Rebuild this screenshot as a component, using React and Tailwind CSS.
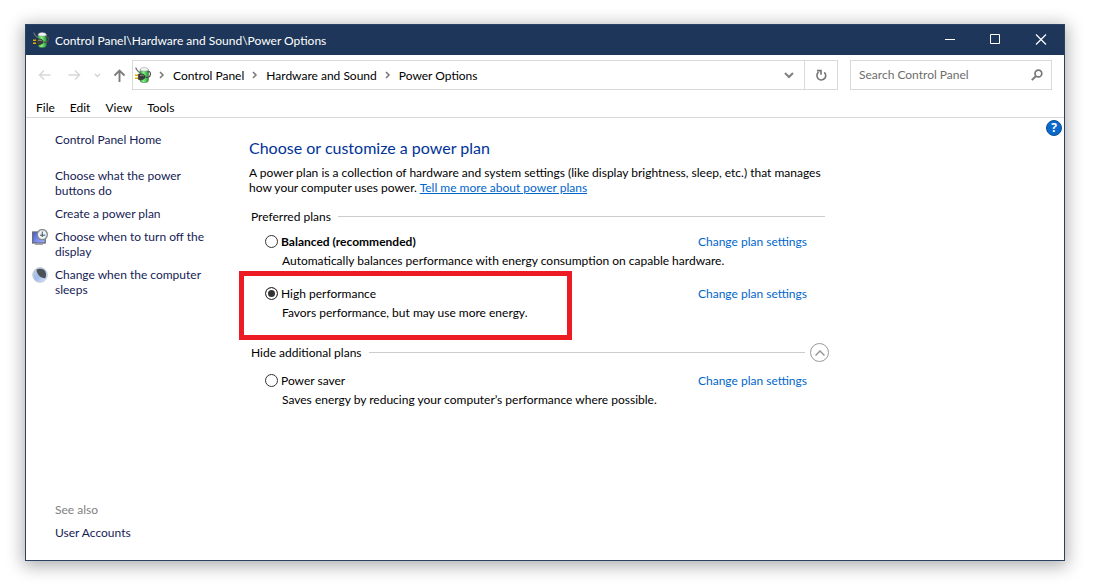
import { useState } from "react";

function PowerIcon({ className }) {
  return (
    <svg viewBox="0 0 16 16" className={className} aria-hidden="true">
      <defs>
        <linearGradient id="battery" x1="0" x2="1" y1="0" y2="0">
          <stop offset="0" stopColor="#2fae3a" />
          <stop offset="0.4" stopColor="#8cf08a" />
          <stop offset="1" stopColor="#1c9a2a" />
        </linearGradient>
      </defs>
      <rect x="5" y="1.500" width="8.500" height="13.900" rx="2.400" fill="url(#battery)" stroke="#3f6a42" strokeWidth="0.500" />
      <path d="M5 3.200C5 1.400 6.800.5 9.200.5s4.300.9 4.300 2.700c-2 1.200-6.500 1.200-8.500 0z" fill="#f2f5f8" stroke="#8a908d" strokeWidth="0.500" />
      <path d="M12.500 5c2.600-1.200 3.200.8 2.800 3-.3 1.800-2 2.700-4.800 2.400" fill="none" stroke="#4d4f50" strokeWidth="1.200" />
      <path d="M.8.500c.4 2.600 2 4 4.200 5.300" fill="none" stroke="#6d7070" strokeWidth="1.200" />
      <path d="M0 8.300h3.600M0 11.300h3.600" stroke="#e0b400" strokeWidth="1.500" />
      <path d="M3.400 7.200 5.500 6.800c2.800 0 4.600 1.100 4.600 3s-1.800 3-4.600 3l-2.100-.4z" fill="#3a3b3b" stroke="#1f2020" strokeWidth="0.500" />
      <path d="M5 8.400c1.500-.5 2.800-.3 3.700.5" fill="none" stroke="#a5a8a8" strokeWidth="0.900" />
    </svg>
  );
}

function DisplayIcon() {
  return (
    <svg viewBox="0 0 16 16" className="size-4" aria-hidden="true">
      <defs>
        <linearGradient id="screen" x1="0" x2="1" y1="0" y2="1">
          <stop offset="0" stopColor="#4258d8" />
          <stop offset="1" stopColor="#a9b8ff" />
        </linearGradient>
      </defs>
      <rect x="0.700" y="3" width="12.500" height="11" fill="url(#screen)" stroke="#666a78" strokeWidth="1.300" />
      <path d="M3 15.300h8" stroke="#8d9098" strokeWidth="1" />
      <circle cx="10.300" cy="5.600" r="5" fill="#eef3f5" stroke="#858b90" strokeWidth="1.400" />
      <path d="M10.300 2.500v3.700h3M10.300 6.200v1.800M8 6.200h2.300" fill="none" stroke="#445566" strokeWidth="1" />
    </svg>
  );
}

function MoonIcon() {
  return (
    <svg viewBox="0 0 16 16" className="size-4" aria-hidden="true">
      <defs>
        <linearGradient id="moon" x1="0" x2="1" y1="0" y2="1">
          <stop offset="0" stopColor="#c9d0d6" />
          <stop offset="0.500" stopColor="#9dbbec" />
          <stop offset="1" stopColor="#e6edf6" />
        </linearGradient>
      </defs>
      <circle cx="8" cy="8" r="7.400" fill="url(#moon)" stroke="#c8ccd2" strokeWidth="0.800" />
      <path d="M4.500 2.800C7 1 11 1.300 13 4c1.500 2.500 1.300 5.200.2 7.200C9.500 11.500 5 8.500 4.500 2.800z" fill="#4c5057" />
    </svg>
  );
}

const crumbs = ["Control Panel", "Hardware and Sound", "Power Options"];
const menus = ["File", "Edit", "View", "Tools"];
const tasks = [
  { text: "Choose what the power buttons do" },
  { text: "Create a power plan" },
  { text: "Choose when to turn off the display", icon: <DisplayIcon /> },
  { text: "Change when the computer sleeps", icon: <MoonIcon /> },
];

function TitleBar() {
  return (
    <header className="flex h-[30px] shrink-0 items-center bg-[#1d3659] pl-[7px] text-white">
      <PowerIcon className="size-4" />
      <h1 className="ml-[6px] flex-1">Control Panel\Hardware and Sound\Power Options</h1>
      <button aria-label="Minimize" className="flex h-full w-[45px] items-center justify-center">
        <svg viewBox="0 0 12 12" className="size-3" stroke="#fff" aria-hidden="true"><path d="M1 5.500h10" /></svg>
      </button>
      <button aria-label="Maximize" className="flex h-full w-[46px] items-center justify-center">
        <svg viewBox="0 0 12 12" className="size-3" fill="none" stroke="#fff" aria-hidden="true"><path d="M1.500.5h9v9h-9z" /></svg>
      </button>
      <button aria-label="Close" className="flex h-full w-[46px] items-center justify-center">
        <svg viewBox="0 0 12 12" className="size-3" stroke="#fff" strokeWidth="1.200" aria-hidden="true"><path d="M1 .5l10 10M11 .5L1 10.500" /></svg>
      </button>
    </header>
  );
}

function AddressRow() {
  return (
    <div className="flex shrink-0 items-center pt-[5px] pr-3 pl-3">
      <nav aria-label="History" className="flex w-[94px] items-center">
        <button aria-label="Back" className="mr-[17px]">
          <svg viewBox="0 0 13 12" className="h-3 w-[13px]" fill="none" stroke="#d8d8d8" strokeWidth="1.500" aria-hidden="true"><path d="M12.500 6H1.500M6 1.500L1.500 6 6 10.500" /></svg>
        </button>
        <button aria-label="Forward" className="mr-[13px]">
          <svg viewBox="0 0 13 12" className="h-3 w-[13px]" fill="none" stroke="#d8d8d8" strokeWidth="1.500" aria-hidden="true"><path d="M.5 6h11M7 1.500L11.500 6 7 10.500" /></svg>
        </button>
        <button aria-label="Recent locations" className="mr-3">
          <svg viewBox="0 0 7 5" className="h-[5px] w-[7px]" fill="none" stroke="#d0d0d0" strokeWidth="1.400" aria-hidden="true"><path d="M1 1l2.500 2.500L6 1" /></svg>
        </button>
        <button aria-label="Up">
          <svg viewBox="0 0 13 13" className="size-[13px]" fill="none" stroke="#7d7d7d" strokeWidth="1.900" aria-hidden="true"><path d="M6.500 13V2M1.500 6.500L6.500 1.500l5 5" /></svg>
        </button>
      </nav>
      <div className="flex h-[30px] flex-1 items-center border border-[#d9d9d9]">
        <PowerIcon className="ml-[2px] size-4" />
        <ol className="flex flex-1 items-center">
          {crumbs.map((crumb) => (
            <li key={crumb} className="flex items-center">
              <svg viewBox="0 0 6 8" className="mr-2 ml-2 h-2 w-[6px]" fill="none" stroke="#777" strokeWidth="1.500" aria-hidden="true">
                <path d="M1 1l3 3-3 3" />
              </svg>
              <a href="#" className="text-black">{crumb}</a>
            </li>
          ))}
        </ol>
        <button aria-label="Previous locations" className="mr-[10px]">
          <svg viewBox="0 0 10 7" className="h-[7px] w-[10px]" fill="none" stroke="#808080" strokeWidth="2" aria-hidden="true"><path d="M1 1l4 4 4-4" /></svg>
        </button>
        <button aria-label="Refresh" className="flex h-full w-[33px] items-center justify-center border-l border-[#d9d9d9]">
          <svg viewBox="0 0 12 12" className="size-3" fill="none" stroke="#747474" strokeWidth="1.600" aria-hidden="true"><path d="M9.300 3.300A4.400 4.400 0 1 1 3.600 3.100M2 1.600h4v4.200" /></svg>
        </button>
      </div>
      <label className="ml-3 flex h-[30px] w-[202px] items-center border border-[#d9d9d9] pr-2 pl-2">
        <input type="text" aria-label="Search Control Panel" placeholder="Search Control Panel" className="min-w-0 flex-1 text-xs outline-none placeholder:text-[#6d6d6d]" />
        <svg viewBox="0 0 12 12" className="size-3" fill="none" stroke="#777" aria-hidden="true">
          <circle cx="7.400" cy="4.500" r="3.400" strokeWidth="1.700" />
          <path d="M5 7L.8 11.200" strokeWidth="1.900" />
        </svg>
      </label>
    </div>
  );
}

function Plan({ id, name, detail, bold, checked, onSelect, highlighted }) {
  return (
    <div className="relative">
      {highlighted && <div className="pointer-events-none absolute -top-[15px] -left-[26px] h-[69px] w-[333px] border-5 border-[#ed1c24]" />}
      <div className="flex items-center">
        <input
          type="radio"
          name="plan"
          id={id}
          checked={checked}
          onChange={onSelect}
          className="size-[13px] appearance-none rounded-full border border-[#333] bg-white checked:bg-[#333] checked:shadow-[inset_0_0_0_2px_#fff]"
        />
        <label htmlFor={id} className={bold ? "ml-[3px] flex-1 font-bold" : "ml-[3px] flex-1"}>{name}</label>
        <a href="#" className="text-[#0066cc]">Change plan settings</a>
      </div>
      <p className="mt-1 ml-[17px]">{detail}</p>
    </div>
  );
}

export default function App() {
  const [plan, setPlan] = useState("high");
  return (
    <div className="flex min-h-screen flex-col bg-white pt-6 pr-7 pb-[27px] pl-[25px] font-['Lato','Open_Sans',sans-serif] text-xs leading-[15px] text-black">
      <div className="flex flex-1 flex-col border border-[#2a4365] bg-white shadow-[0_3px_16px_2px_rgba(0,0,0,0.32)]">
        <TitleBar />
        <AddressRow />
        <nav aria-label="Menu" className="flex shrink-0 gap-[15px] border-b border-[#d9d9d9] pt-[10px] pb-[2px] pl-[10px]">
          {menus.map((menu) => (
            <button key={menu}>{menu}</button>
          ))}
        </nav>
        <div className="flex flex-1">
          <aside className="flex w-[223px] shrink-0 flex-col pt-[14px] pr-8 pb-5 pl-[6px] text-[#151c55]">
            <a href="#" className="ml-[23px]">Control Panel Home</a>
            <ul className="mt-[21px] flex flex-col gap-2">
              {tasks.map((task) => (
                <li key={task.text} className="flex">
                  <span className="w-[23px] shrink-0">{task.icon}</span>
                  <a href="#">{task.text}</a>
                </li>
              ))}
            </ul>
            <h2 className="mt-auto ml-[23px] text-[#808080]">See also</h2>
            <a href="#" className="mt-2 ml-[23px]">User Accounts</a>
          </aside>
          <main className="max-w-[580px] flex-1 pt-5">
            <h2 className="text-base leading-5 text-[#003399]">Choose or customize a power plan</h2>
            <p className="mt-[7px]">
              A power plan is a collection of hardware and system settings (like display brightness, sleep, etc.) that manages how your computer uses power.{" "}
              <a href="#" className="text-[#0066cc] underline">Tell me more about power plans</a>
            </p>
            <div className="mt-[14px] mr-1 ml-[2px] flex items-center gap-[7px]">
              <h3>Preferred plans</h3>
              <hr className="flex-1 border-[#ccc]" />
            </div>
            <div className="mt-[10px] mr-[22px] ml-4 flex flex-col gap-[18px]">
              <Plan id="balanced" name="Balanced (recommended)" detail="Automatically balances performance with energy consumption on capable hardware." bold checked={plan === "balanced"} onSelect={() => setPlan("balanced")} />
              <Plan id="high" name="High performance" detail="Favors performance, but may use more energy." highlighted checked={plan === "high"} onSelect={() => setPlan("high")} />
            </div>
            <div className="mt-[23px] ml-[2px] flex items-center">
              <h3>Hide additional plans</h3>
              <hr className="mr-[5px] ml-[7px] flex-1 border-[#ccc]" />
              <button aria-label="Hide additional plans" className="flex size-[19px] items-center justify-center rounded-full border border-[#999]">
                <svg viewBox="0 0 10 6" className="h-[6px] w-[10px]" fill="none" stroke="#999" strokeWidth="1.500" aria-hidden="true"><path d="M.5 5.500L5 1l4.500 4.500" /></svg>
              </button>
            </div>
            <div className="mt-[11px] mr-[22px] ml-4">
              <Plan id="saver" name="Power saver" detail="Saves energy by reducing your computer’s performance where possible." checked={plan === "saver"} onSelect={() => setPlan("saver")} />
            </div>
          </main>
          <div className="ml-auto pt-[2px] pr-[2px]">
            <button aria-label="Help" className="flex size-4 items-center justify-center rounded-full border border-[#0b4f94] bg-[#0a68cf] font-['Open_Sans',sans-serif] text-xs font-bold text-white">?</button>
          </div>
        </div>
      </div>
    </div>
  );
}
